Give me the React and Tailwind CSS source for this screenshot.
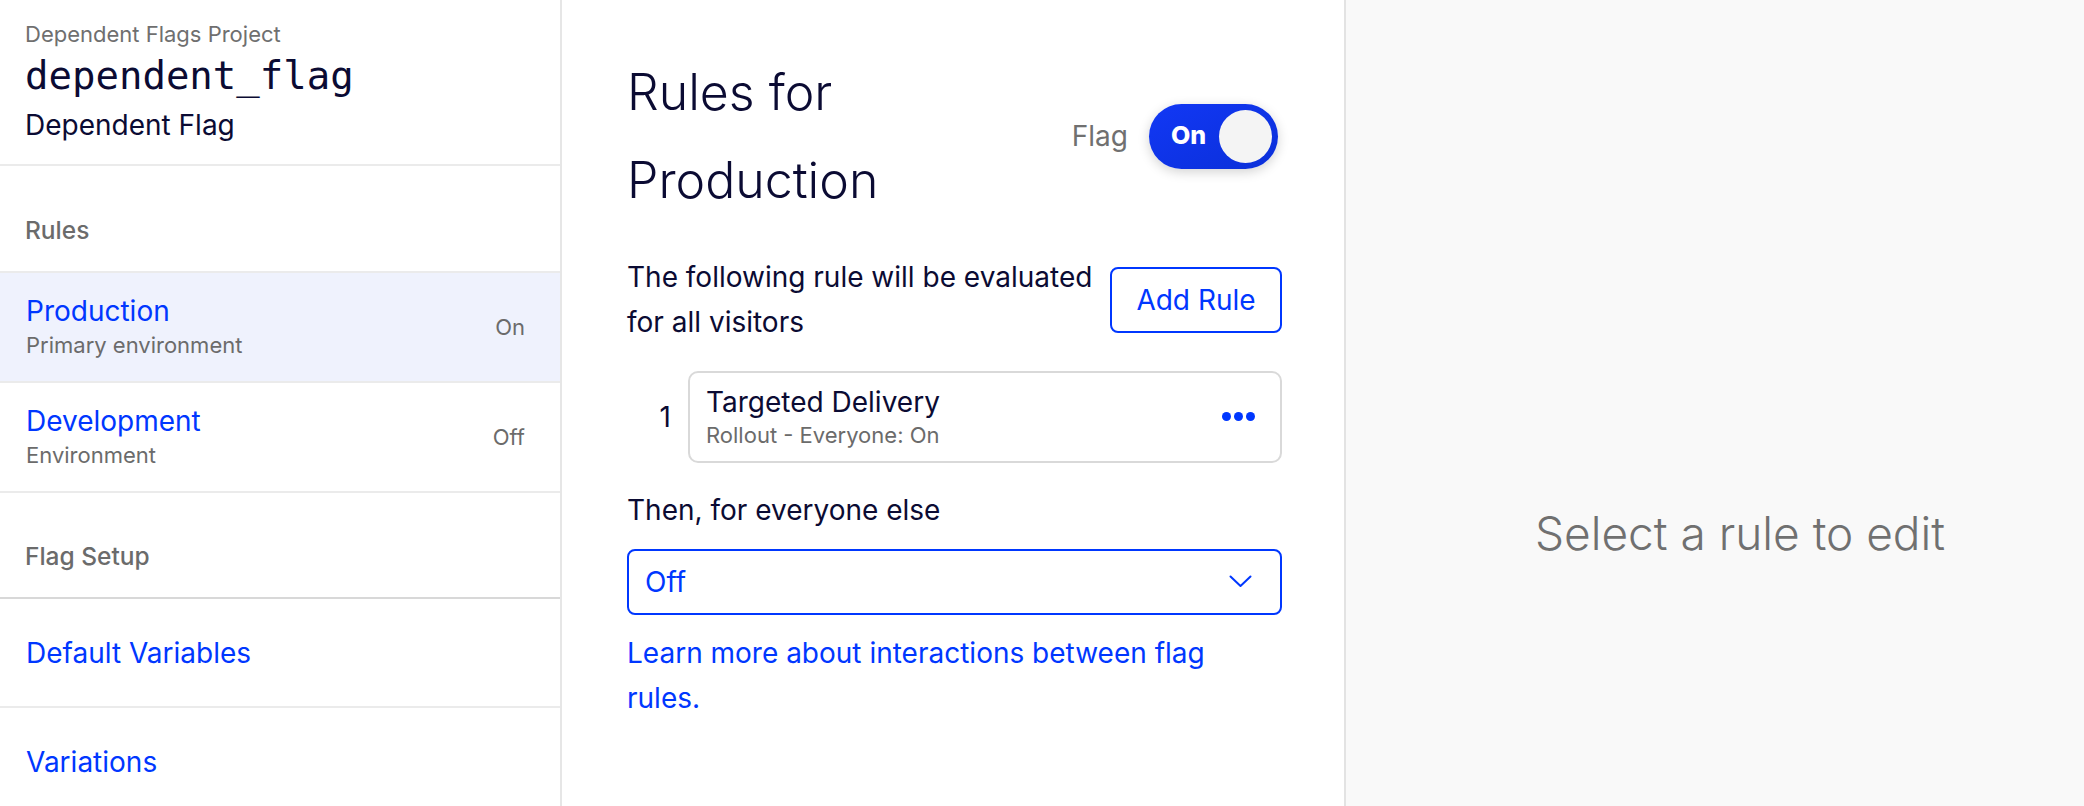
import React from "react";

const BLUE = "text-[#0037ff]";

const EnvRow = ({ name, desc, status, active }) => (
  <div
    className={`h-[110px] flex items-center justify-between pl-[26px] pr-[35px] border-b-2 border-[#ebebeb] ${
      active ? "bg-[#eff2fd]" : "bg-white"
    }`}
  >
    <div>
      <div className={`text-[28px] leading-[36px] ${BLUE}`}>{name}</div>
      <div className="text-[22px] leading-[33px] text-[#6b6b6b]">{desc}</div>
    </div>
    <div className="text-[22px] text-[#6b6b6b]">{status}</div>
  </div>
);

const SectionLabel = ({ children, height, pt, dark }) => (
  <div
    className={`${height} ${pt} px-[25px] border-b-2 ${
      dark ? "border-[#d8d8d8]" : "border-[#ebebeb]"
    }`}
  >
    <div className="text-[24.5px] leading-[32px] font-medium text-[#6b6b6b]">
      {children}
    </div>
  </div>
);

const NavLink = ({ children }) => (
  <div className="h-[109px] flex items-center pl-[26px] border-b-2 border-[#ebebeb]">
    <span className={`text-[28px] ${BLUE}`}>{children}</span>
  </div>
);

const Sidebar = () => (
  <aside className="w-[562px] shrink-0 h-full border-r-2 border-[#e6e6e6] bg-white overflow-hidden">
    <div className="h-[166px] pt-[20px] px-[25px] border-b-2 border-[#ebebeb]">
      <div className="text-[22px] leading-[28px] text-[#6f6f6f]">
        Dependent Flags Project
      </div>
      <div className="font-['DejaVu_Sans_Mono',monospace] text-[39px] leading-[56px] text-[#0b0b33]">
        dependent_flag
      </div>
      <div className="text-[28px] leading-[42px] text-[#0b0b33]">
        Dependent Flag
      </div>
    </div>
    <SectionLabel height="h-[107px]" pt="pt-[48px]">
      Rules
    </SectionLabel>
    <EnvRow name="Production" desc="Primary environment" status="On" active />
    <EnvRow name="Development" desc="Environment" status="Off" />
    <SectionLabel height="h-[106px]" pt="pt-[47px]" dark>
      Flag Setup
    </SectionLabel>
    <NavLink>Default Variables</NavLink>
    <NavLink>Variations</NavLink>
  </aside>
);

const Toggle = () => (
  <div className="relative w-[129px] h-[65px] rounded-full bg-gradient-to-br from-[#1238f5] to-[#0a2fd9] shadow-[0_3px_12px_rgba(0,0,0,0.18)]">
    <span className="absolute left-[22px] top-0 h-full flex items-center text-[25px] font-extrabold text-white">
      On
    </span>
    <span className="absolute right-[6px] top-[6px] w-[53px] h-[53px] rounded-full bg-[#f4f4f4]" />
  </div>
);

const Dots = () => (
  <div className="flex items-center gap-[3px]">
    <span className="w-[9px] h-[9px] rounded-full bg-[#0037ff]" />
    <span className="w-[9px] h-[9px] rounded-full bg-[#0037ff]" />
    <span className="w-[9px] h-[9px] rounded-full bg-[#0037ff]" />
  </div>
);

const Chevron = () => (
  <svg width="23" height="13" viewBox="0 0 23 13" fill="none">
    <polyline
      points="1.5,1.5 11.5,11 21.5,1.5"
      stroke="#0037ff"
      strokeWidth="2"
      strokeLinecap="round"
      strokeLinejoin="round"
    />
  </svg>
);

const RulesPanel = () => (
  <main className="w-[782px] shrink-0 h-full bg-white pt-[48px] pl-[65px] pr-[62px] text-[#0b0b33]">
    <div className="flex items-center">
      <h1 className="flex-1 text-[50px] leading-[88px] font-light text-[#0b0b33]">
        Rules for Production
      </h1>
      <div className="flex items-center gap-[21px] mr-[4px]">
        <span className="text-[28px] text-[#707070]">Flag</span>
        <Toggle />
      </div>
    </div>

    <div className="mt-[31px] flex items-center gap-[16px]">
      <p className="flex-1 text-[28px] leading-[45.33px]">
        The following rule will be evaluated for all visitors
      </p>
      <button
        type="button"
        className={`w-[172px] h-[66px] border-2 border-[#0037ff] rounded-[8px] text-[28px] ${BLUE}`}
      >
        Add Rule
      </button>
    </div>

    <div className="mt-[25px] flex items-center">
      <div className="w-[61px] pr-[17px] text-right text-[28px]">1</div>
      <div className="flex-1 h-[92px] border-2 border-[#d9d9d9] rounded-[10px] pl-[16px] pr-[25px] flex items-center justify-between">
        <div>
          <div className="text-[28px] leading-[36px]">Targeted Delivery</div>
          <div className="text-[22px] leading-[30px] text-[#6b6b6b]">
            Rollout - Everyone: On
          </div>
        </div>
        <Dots />
      </div>
    </div>

    <div className="mt-[25px] text-[28px] leading-[45.33px]">
      Then, for everyone else
    </div>

    <div className="mt-[16px] h-[66px] border-2 border-[#0037ff] rounded-[8px] pl-[16px] pr-[28px] flex items-center justify-between">
      <span className={`text-[28px] ${BLUE}`}>Off</span>
      <Chevron />
    </div>

    <p className={`mt-[16px] max-w-[620px] text-[28px] leading-[45.33px] ${BLUE}`}>
      Learn more about interactions between flag rules.
    </p>
  </main>
);

const EmptyEditor = () => (
  <section className="flex-1 h-full bg-[#f9f9f9] border-l-2 border-[#e3e3e3] pt-[505px] pl-[50px] text-center">
    <div className="text-[46px] leading-[56px] font-light text-[#707070]">
      Select a rule to edit
    </div>
  </section>
);

export default function App() {
  return (
    <div className="w-[2084px] h-[806px] flex overflow-hidden bg-white font-['Inter',sans-serif]">
      <Sidebar />
      <RulesPanel />
      <EmptyEditor />
    </div>
  );
}
